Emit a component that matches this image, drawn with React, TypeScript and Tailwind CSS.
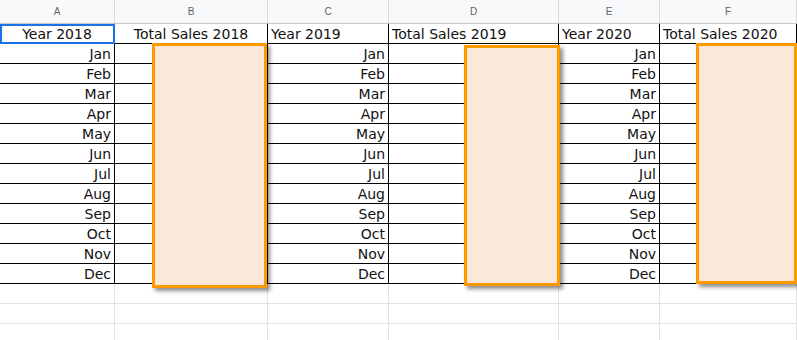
const cols = [
  { letter: 'A', w: 'w-[115px]' },
  { letter: 'B', w: 'w-[153px]' },
  { letter: 'C', w: 'w-[121px]' },
  { letter: 'D', w: 'w-[170px]' },
  { letter: 'E', w: 'w-[101px]' },
  { letter: 'F', w: 'w-[137px]' },
];

const months = ['Jan', 'Feb', 'Mar', 'Apr', 'May', 'Jun', 'Jul', 'Aug', 'Sep', 'Oct', 'Nov', 'Dec'];

const titles = [
  { text: 'Year 2018', align: 'justify-center' },
  { text: 'Total Sales 2018', align: 'justify-center' },
  { text: 'Year 2019', align: 'justify-start pl-[3px]' },
  { text: 'Total Sales 2019', align: 'justify-start pl-[3px]' },
  { text: 'Year 2020', align: 'justify-start pl-[3px]' },
  { text: 'Total Sales 2020', align: 'justify-start pl-[3px]' },
];

// shapes drawn over the sheet
const boxes = [
  'left-[152px] top-[43px] w-[115px] h-[245px]',
  'left-[464px] top-[45px] w-[96px] h-[241px]',
  'left-[696px] top-[43px] w-[101px] h-[241px]',
];

export default function App() {
  return (
    <div className="relative w-[797px] h-[340px] overflow-hidden bg-white font-['DejaVu_Sans',Verdana,sans-serif] text-[14px] text-[#111]">
      {/* column letters */}
      <div className="flex h-[24px] bg-[#f8f9fa] border-b border-[#c7c7c7]">
        {cols.map(c => (
          <div key={c.letter} className={`${c.w} shrink-0 flex items-center justify-center border-r border-[#d9d9d9] text-[10px] text-[#5f6368] font-['Liberation_Sans',Arial,sans-serif]`}>
            {c.letter}
          </div>
        ))}
      </div>

      {/* title row */}
      <div className="flex h-[20px]">
        {cols.map((c, i) => (
          <div key={c.letter} className={`${c.w} shrink-0 flex items-center ${titles[i].align} pt-[1px] border-r border-b border-black leading-none ${i === 0 ? 'outline-2 outline-[#1a73e8] -outline-offset-2' : ''}`}>
            {titles[i].text}
          </div>
        ))}
      </div>

      {/* months */}
      {months.map(m => (
        <div key={m} className="flex h-[20px]">
          {cols.map((c, i) => (
            <div key={c.letter} className={`${c.w} shrink-0 flex items-center justify-end pr-[3px] pt-[1px] border-r border-b border-black leading-none`}>
              {i % 2 === 0 ? m : ''}
            </div>
          ))}
        </div>
      ))}

      {/* empty rows */}
      {[0, 1, 2].map(r => (
        <div key={r} className="flex h-[20px]">
          {cols.map(c => (
            <div key={c.letter} className={`${c.w} shrink-0 border-r border-b border-[#e2e2e2]`} />
          ))}
        </div>
      ))}

      {boxes.map(b => (
        <div key={b} className={`absolute ${b} bg-[#fce8d9] border-[3px] border-[#ff9900] shadow-[3px_3px_4px_rgba(0,0,0,0.45)]`} />
      ))}
    </div>
  );
}
